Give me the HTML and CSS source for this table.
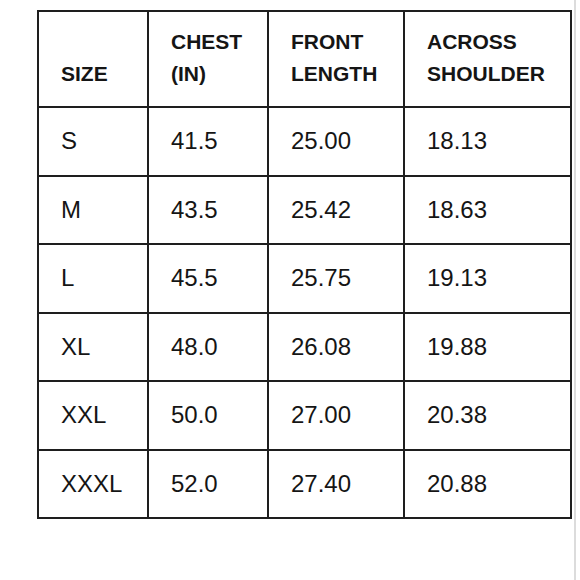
FILE: index.html
```html
<!DOCTYPE html>
<html lang="en">
<head>
<meta charset="utf-8">
<title>Size chart</title>
<link rel="stylesheet" href="styles.css">
</head>
<body>
<div class="page">
  <div class="chart">
    <div class="cell head"><span>SIZE</span></div>
    <div class="cell head"><span>CHEST</span><span>(IN)</span></div>
    <div class="cell head"><span>FRONT</span><span>LENGTH</span></div>
    <div class="cell head"><span>ACROSS</span><span>SHOULDER</span></div>

    <div class="cell">S</div><div class="cell">41.5</div><div class="cell">25.00</div><div class="cell">18.13</div>
    <div class="cell">M</div><div class="cell">43.5</div><div class="cell">25.42</div><div class="cell">18.63</div>
    <div class="cell">L</div><div class="cell">45.5</div><div class="cell">25.75</div><div class="cell">19.13</div>
    <div class="cell">XL</div><div class="cell">48.0</div><div class="cell">26.08</div><div class="cell">19.88</div>
    <div class="cell">XXL</div><div class="cell">50.0</div><div class="cell">27.00</div><div class="cell">20.38</div>
    <div class="cell">XXXL</div><div class="cell">52.0</div><div class="cell">27.40</div><div class="cell">20.88</div>
  </div>
</div>
</body>
</html>
```

FILE: styles.css
```css
html, body {
  margin: 0;
  padding: 0;
  background: #ffffff;
}

.page {
  width: 576px;
  height: 580px;
  border-right: 2px solid #dcdcdc;
  padding: 10px 0 0 37px;
  box-sizing: border-box;
  font-family: "Liberation Sans", Arial, sans-serif;
  color: #151515;
}

.chart {
  display: grid;
  grid-template-columns: 110px 120px 136px 167px;
  grid-template-rows: 96px repeat(6, 68.5px);
  width: 535px;
  border-left: 2px solid #1e1e1e;
  border-top: 2px solid #1e1e1e;
  box-sizing: border-box;
}

.cell {
  border-right: 2px solid #1e1e1e;
  border-bottom: 2px solid #1e1e1e;
  padding-left: 22px;
  display: flex;
  align-items: center;
  font-size: 24px;
  line-height: 28px;
  box-sizing: border-box;
}

.head {
  flex-direction: column;
  align-items: flex-start;
  justify-content: flex-end;
  padding-bottom: 16px;
  font-size: 21px;
  font-weight: bold;
  line-height: 32px;
}
```
